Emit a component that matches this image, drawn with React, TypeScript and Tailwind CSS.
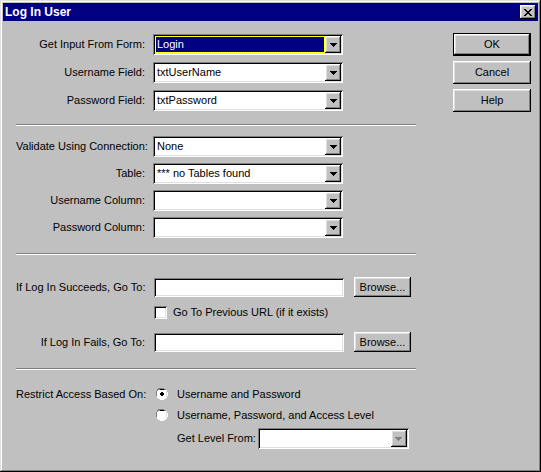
import React from "react";

// Win98-style bevels
const RAISED =
  "shadow-[inset_-1px_-1px_#000,inset_1px_1px_#fff,inset_-2px_-2px_#808080,inset_2px_2px_#dfdfdf]";
const SUNKEN =
  "shadow-[inset_1px_1px_#808080,inset_-1px_-1px_#fff,inset_2px_2px_#000,inset_-2px_-2px_#dfdfdf]";

function Arrow({ disabled }: { disabled?: boolean }) {
  return (
    <svg width="7" height="4" viewBox="0 0 7 4" className="block">
      {disabled && <path d="M2 4h5v-1h1v1z" fill="#fff" />}
      <path d="M0 0h7v1h-1v1h-1v1h-1v1h-1v-1h-1v-1h-1v-1h-1z" fill={disabled ? "#808080" : "#000"} />
    </svg>
  );
}

function Combo({
  value,
  focused,
  disabled,
  className = "",
}: {
  value?: string;
  focused?: boolean;
  disabled?: boolean;
  className?: string;
}) {
  return (
    <div className={`relative flex h-[21px] bg-white ${SUNKEN} ${className}`}>
      <div className="flex min-w-0 flex-1 items-center pl-[3px] pr-[1px] py-[3px]">
        {focused ? (
          <div className="flex h-full w-full items-center bg-[#000080] pl-[1px] text-white outline outline-1 outline-dotted outline-[#ffff00]">
            {value}
          </div>
        ) : (
          <span className="pl-[1px] whitespace-nowrap">{value}</span>
        )}
      </div>
      <div className={`mr-[2px] mt-[2px] flex h-[17px] w-[16px] shrink-0 items-center justify-center bg-[#c0c0c0] ${RAISED}`}>
        <Arrow disabled={disabled} />
      </div>
    </div>
  );
}

function TextBox() {
  return <div className={`h-[19px] w-[190px] bg-white ${SUNKEN}`} />;
}

function Button({ label, def, className = "" }: { label: string; def?: boolean; className?: string }) {
  return (
    <div
      className={`flex items-center justify-center bg-[#c0c0c0] ${def ? "border border-black" : ""} ${RAISED} ${className}`}
    >
      {label}
    </div>
  );
}

function Separator({ className = "" }: { className?: string }) {
  return <div className={`h-[2px] w-[400px] border-t border-b border-t-[#808080] border-b-white ${className}`} />;
}

function FieldRow({
  label,
  children,
  className = "",
}: {
  label: string;
  children: React.ReactNode;
  className?: string;
}) {
  return (
    <div className={`flex items-center ${className}`}>
      <div className="w-[129px] shrink-0 text-right whitespace-nowrap">{label}</div>
      <div className="ml-[8px]">{children}</div>
    </div>
  );
}

function Radio({ checked }: { checked?: boolean }) {
  return (
    <svg width="12" height="12" viewBox="0 0 12 12" className="block shrink-0">
      <path d="M4 0h4v1h2v1h1v2h1v4h-1v2h-1v1h-2v1h-4v-1h-2v-1h-1v-2h-1v-4h1v-2h1v-1h2z" fill="#fff" />
      <path d="M4 0h4v1h2v1h-2v-1h-4v1h-2v1h-1v2h-1v-2h1v-2h1v-1h2zM0 4h1v4h-1z" fill="#808080" />
      <path d="M4 1h4v1h2v1h-2v-1h-4v1h-2v1h-1v4h-1v0h1v-4h1v-1h1v-1h1z" fill="#000" />
      <path d="M2 2h8v8h-8z" fill="#fff" />
      <path d="M3 2h6v1h1v6h-1v1h-6v-1h-1v-6h1z" fill="#fff" />
      <path d="M10 3h1v1h-1zM11 4h0v4h-1v-4z" fill="#dfdfdf" />
      {checked && <path d="M5 4h2v1h1v2h-1v1h-2v-1h-1v-2h1z" fill="#000" />}
    </svg>
  );
}

export default function App() {
  return (
    <div
      className="flex h-[472px] w-[541px] flex-col bg-[#c0c0c0] p-[3px] text-[11px] leading-none text-black shadow-[inset_-1px_-1px_#000,inset_1px_1px_#dfdfdf,inset_-2px_-2px_#808080,inset_2px_2px_#fff]"
      style={{ fontFamily: "'Liberation Sans', Arial, sans-serif" }}
    >
      {/* title bar */}
      <div className="flex h-[18px] shrink-0 items-center bg-[#000080] pl-[2px] pr-[2px]">
        <span className="text-[12px] font-bold text-white">Log In User</span>
        <div className={`ml-auto flex h-[14px] w-[16px] items-center justify-center bg-[#c0c0c0] ${RAISED}`}>
          <svg width="8" height="7" viewBox="0 0 8 7" className="block">
            <path
              d="M0 0h2v1h1v1h2v-1h1v-1h2v1h-1v1h-1v1h-1v1h1v1h1v1h1v1h-2v-1h-1v-1h-2v1h-1v1h-2v-1h1v-1h1v-1h1v-1h-1v-1h-1v-1h-1z"
              fill="#000"
            />
          </svg>
        </div>
      </div>

      <div className="flex">
        {/* left column */}
        <div className="ml-[13px] w-[400px]">
          <div className="flex flex-col gap-[7px] pt-[13px]">
            <FieldRow label="Get Input From Form:">
              <Combo value="Login" focused className="w-[190px]" />
            </FieldRow>
            <FieldRow label="Username Field:">
              <Combo value="txtUserName" className="w-[190px]" />
            </FieldRow>
            <FieldRow label="Password Field:">
              <Combo value="txtPassword" className="w-[190px]" />
            </FieldRow>
          </div>

          <Separator className="mt-[13px]" />

          <div className="mt-[10px] flex flex-col gap-[6px]">
            <FieldRow label="Validate Using Connection:">
              <Combo value="None" className="w-[190px]" />
            </FieldRow>
            <FieldRow label="Table:">
              <Combo value="*** no Tables found" className="w-[190px]" />
            </FieldRow>
            <FieldRow label="Username Column:">
              <Combo className="w-[190px]" />
            </FieldRow>
            <FieldRow label="Password Column:">
              <Combo className="w-[190px]" />
            </FieldRow>
          </div>

          <Separator className="mt-[15px]" />

          <div className="mt-[22px] flex flex-col">
            <FieldRow label="If Log In Succeeds, Go To:">
              <div className="ml-[1px] flex items-center">
                <TextBox />
                <Button label="Browse..." className="ml-[10px] h-[20px] w-[57px]" />
              </div>
            </FieldRow>
            <div className="mt-[9px] flex items-center pl-[138px]">
              <div className={`h-[13px] w-[13px] bg-white ${SUNKEN}`} />
              <span className="ml-[6px]">Go To Previous URL (if it exists)</span>
            </div>
            <FieldRow label="If Log In Fails, Go To:" className="mt-[13px]">
              <div className="ml-[1px] flex items-center">
                <TextBox />
                <Button label="Browse..." className="ml-[10px] h-[20px] w-[57px]" />
              </div>
            </FieldRow>
          </div>

          <Separator className="mt-[16px]" />

          <div className="mt-[14px] flex flex-col">
            <div className="flex h-[20px] items-center">
              <span className="w-[140px] shrink-0 whitespace-nowrap">Restrict Access Based On:</span>
              <Radio checked />
              <span className="ml-[9px]">Username and Password</span>
            </div>
            <div className="mt-[1px] flex h-[20px] items-center pl-[140px]">
              <Radio />
              <span className="ml-[9px]">Username, Password, and Access Level</span>
            </div>
            <div className="mt-[3px] flex items-center pl-[161px]">
              <span className="whitespace-nowrap">Get Level From:</span>
              <Combo disabled className="ml-[2px] h-[20px] w-[151px]" />
            </div>
          </div>
        </div>

        {/* right column */}
        <div className="ml-[37px] flex flex-col gap-[5px] pt-[12px]">
          <Button label="OK" def className="h-[23px] w-[78px]" />
          <Button label="Cancel" className="h-[23px] w-[78px]" />
          <Button label="Help" className="h-[23px] w-[78px]" />
        </div>
      </div>
    </div>
  );
}
